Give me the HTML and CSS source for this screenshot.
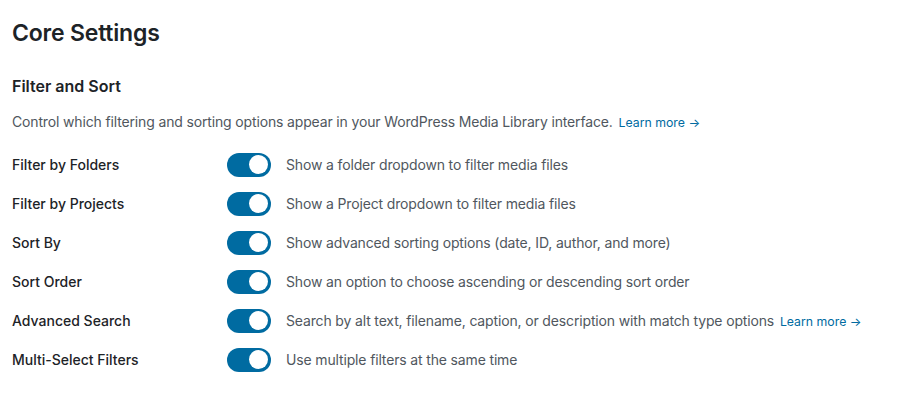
FILE: index.html
```html
<!DOCTYPE html>
<html lang="en">
<head>
<meta charset="utf-8">
<link rel="stylesheet" href="styles.css">
</head>
<body>
<div class="page">
  <h1 class="title">Core Settings</h1>
  <h2 class="subtitle">Filter and Sort</h2>
  <p class="intro">Control which filtering and sorting options appear in your WordPress Media Library interface. <a class="learn" href="#">Learn more →</a></p>
  <div class="rows">
    <div class="row"><span class="label">Filter by Folders</span><span class="toggle"><span class="knob"></span></span><span class="desc">Show a folder dropdown to filter media files</span></div>
    <div class="row"><span class="label">Filter by Projects</span><span class="toggle"><span class="knob"></span></span><span class="desc">Show a Project dropdown to filter media files</span></div>
    <div class="row"><span class="label">Sort By</span><span class="toggle"><span class="knob"></span></span><span class="desc">Show advanced sorting options (date, ID, author, and more)</span></div>
    <div class="row"><span class="label">Sort Order</span><span class="toggle"><span class="knob"></span></span><span class="desc">Show an option to choose ascending or descending sort order</span></div>
    <div class="row"><span class="label">Advanced Search</span><span class="toggle"><span class="knob"></span></span><span class="desc">Search by alt text, filename, caption, or description with match type options <a class="learn" href="#">Learn more →</a></span></div>
    <div class="row"><span class="label">Multi-Select Filters</span><span class="toggle"><span class="knob"></span></span><span class="desc">Use multiple filters at the same time</span></div>
  </div>
</div>
</body>
</html>
```
FILE: styles.css
```css
* { box-sizing: border-box; }
html, body { margin: 0; padding: 0; background: #fff; }
body { font-family: Inter, "Noto Sans", "Liberation Sans", sans-serif; color: #1d2327; }
.page { padding: 19px 12px 0 12px; }
.title { font-size: 23px; font-weight: 600; margin: 0; line-height: 28px; letter-spacing: -0.2px; }
.subtitle { font-size: 16px; font-weight: 600; margin: 29px 0 0; line-height: 20px; }
.intro { font-size: 14px; color: #50575e; margin: 16px 0 0; line-height: 20px; letter-spacing: -0.15px; }
.learn { color: #006ba1; text-decoration: none; font-size: 12.3px; margin-left: 2px; letter-spacing: 0; }
.rows { margin-top: 12px; display: flex; flex-direction: column; }
.row { display: flex; align-items: center; height: 39px; }
.label { width: 215px; font-size: 14px; font-weight: 500; color: #1d2327; }
.toggle { width: 44px; height: 24px; border-radius: 12px; background: #006ba1; display: flex; align-items: center; justify-content: flex-end; padding-right: 3px; flex-shrink: 0; }
.knob { width: 19px; height: 19px; border-radius: 50%; background: #fff; }
.desc { margin-left: 15px; font-size: 14px; color: #50575e; letter-spacing: -0.15px; }
```
